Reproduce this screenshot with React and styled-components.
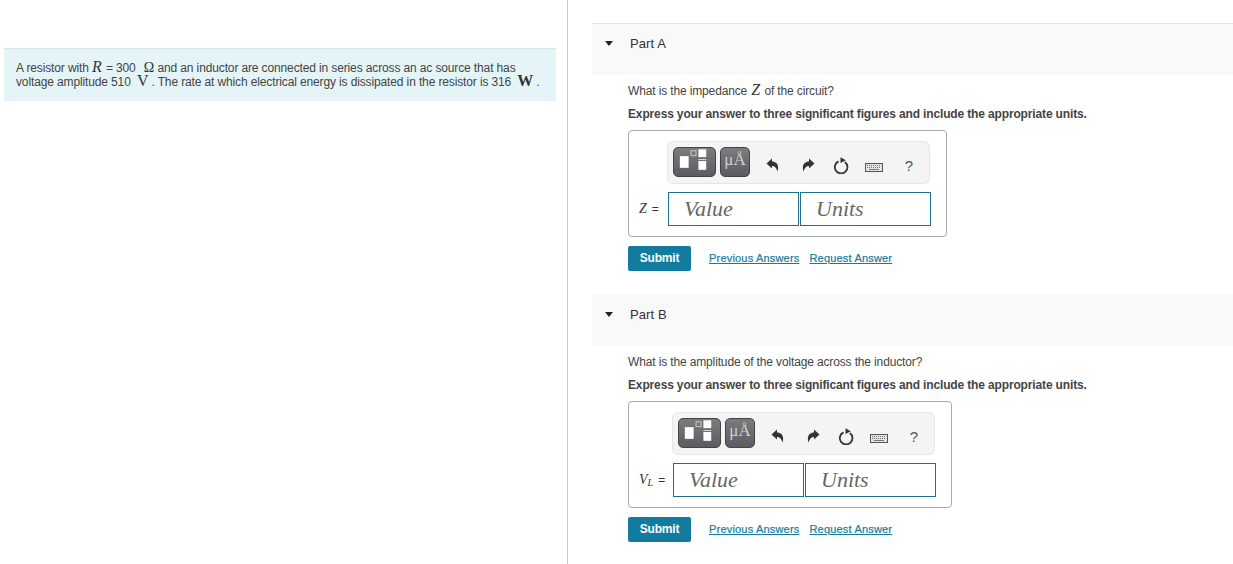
import React from "react";
import styled, { createGlobalStyle } from "styled-components";

const Global = createGlobalStyle`
  html, body { margin: 0; padding: 0; background: #fff; overflow: hidden; }
  body { font-family: "Liberation Sans", Arial, sans-serif; color: #333; }
`;
const Page = styled.div`display: flex; width: 1233px; height: 564px; overflow: hidden;`;
const LeftPane = styled.aside`
  flex: none; width: 568px; height: 564px; box-sizing: border-box; border-right: 1px solid #b9cfd6; padding-top: 48px;
`;
const Callout = styled.div`
  margin-left: 4px; width: 552px; height: 53px; box-sizing: border-box; background: #e5f5f7;
  border-top: 1px solid #d5e6e8; padding: 12px 0 0 12px; font-size: 12px; line-height: 14px; color: #444; letter-spacing: -0.13px;
`;
const MathVar = styled.span`
  font-family: "Liberation Serif", "DejaVu Serif", serif; font-size: ${p => p.$size || 16}px; line-height: 12px; letter-spacing: 0;
  font-style: ${p => (p.$upright ? "normal" : "italic")}; font-weight: ${p => (p.$bold ? 700 : 400)};
  color: #333; margin: 0 ${p => p.$right ?? p.$gap ?? 0}px 0 ${p => p.$gap || 0}px;
`;
const RightPane = styled.main`flex: 1; padding: 23px 0 0 24px; min-width: 0;`;
const Part = styled.section`height: 271px;`;
const Band = styled.header`
  height: 52px; box-sizing: border-box; background: #f9f9f9; border-top: 1px solid ${p => (p.$first ? "#e2e2e2" : "#fff")};
  display: flex; align-items: flex-start; padding: 12px 0 0 13px; font-size: 13px; line-height: 15px; color: #333; letter-spacing: 0.1px;
`;
const Caret = styled.span`
  width: 0; height: 0; border-left: 4.5px solid transparent; border-right: 4.5px solid transparent; border-top: 5px solid #222;
  margin: 5px 17px 0 0; flex: none;
`;
const Body = styled.div`padding: 9px 0 0 36px;`;
const Question = styled.p`margin: 0; font-size: 12px; line-height: 14px; color: #444; height: 23px; letter-spacing: -0.14px;`;
const Instruction = styled.p`margin: 0; font-size: 12px; line-height: 14px; font-weight: 700; color: #444; letter-spacing: -0.145px;`;
const Card = styled.div`
  margin-top: 9px; width: ${p => p.$w}px; height: 107px; box-sizing: border-box; border: 1px solid #aaa; border-radius: 4px;
  padding: 10px 0 0 ${p => p.$indent}px;
`;
const Toolbar = styled.div`
  width: 263px; height: 43px; box-sizing: border-box; background: #f4f4f4; border: 1px solid #e6e6e6; border-radius: 6px;
  display: flex; align-items: flex-start; padding: 5px 0 0 5px;
`;
const TemplateBtn = styled.button`
  width: ${p => p.$w}px; height: 30px; padding: 0; border: 1px solid #444; border-radius: 5px; margin-right: 4px; flex: none;
  background: linear-gradient(#7c7c80, #5c5c60); display: flex; align-items: center; justify-content: center;
  font-family: "Liberation Serif", serif; color: #cfcfcf; font-size: 17px; line-height: 1;
`;
const UnitGlyph = styled.span`margin-top: -6px;`;
const ToolIcon = styled.span`display: flex; width: ${p => p.$w}px; height: 30px; align-items: center; justify-content: center; flex: none; margin-top: ${p => p.$mt || 0}px;`;
const Help = styled.span`font-size: 15px; color: #555; line-height: 1;`;
const InputRow = styled.div`display: flex; align-items: center; margin-top: 8px; margin-left: ${p => p.$back}px;`;
const Label = styled.div`
  font-size: 12px; color: #333; width: ${p => p.$w}px; flex: none; box-sizing: border-box; padding-left: 10px; white-space: nowrap;
`;
const LabelVar = styled.span`font-family: "Liberation Serif", serif; font-style: italic; font-size: 14px; margin-right: 5px;`;
const Sub = styled.sub`font-size: 10px; line-height: 0; vertical-align: -2px;`;
const Field = styled.div`
  width: 131px; height: 34px; box-sizing: border-box; border: 1px solid #1d6f8a; margin-right: 1px; padding-left: 15px;
  font-family: "Liberation Serif", serif; font-style: italic; font-size: 22px; line-height: 31px; color: #666; background: #fff;
`;
const Actions = styled.div`display: flex; align-items: center; margin-top: 9px;`;
const Submit = styled.button`
  width: 63px; height: 25px; padding: 0 0 2px; border: 0; border-radius: 2px; background: #137c9e; color: #fff;
  font-family: "Liberation Sans", sans-serif; font-size: 12px; font-weight: 700; margin-right: 18px; letter-spacing: -0.2px;
`;
const Link = styled.a`
  font-size: 11px; color: #137c9e; text-decoration: underline; margin: 0 10px 2px 0; cursor: pointer; line-height: 14px;
  letter-spacing: 0.19px; -webkit-text-stroke: 0.2px #137c9e;
`;

const TemplateIcon = () => (
  <svg width="42" height="28" viewBox="0 0 42 28">
    <rect x="6" y="8" width="9" height="12" fill="#fff" />
    <rect x="17.5" y="2.5" width="5" height="5" fill="none" stroke="#ccc" strokeWidth="1" />
    <rect x="25" y="1" width="8" height="8" fill="#fff" />
    <rect x="25" y="11" width="8" height="1" fill="#ddd" />
    <rect x="25" y="13" width="8" height="9" fill="#fff" />
  </svg>
);
const Undo = ({ flip }) => (
  <svg width="13" height="14" viewBox="0 0 13 14" style={flip ? { transform: "scaleX(-1)" } : undefined}>
    <path d="M0.5 5.5 L6 0.5 V3.5 C10.5 3.5 13.5 7 11.5 13.5 C10.5 10 9 8 6 8 V10.5 Z" fill="#333" />
  </svg>
);
const Reset = () => (
  <svg width="16" height="17" viewBox="0 0 16 17">
    <path d="M5.5 4.4 A6.3 6.3 0 1 0 11.8 5" fill="none" stroke="#333" strokeWidth="1.8" />
    <path d="M7.5 0.3 L12.8 3.3 L7.5 6 Z" fill="#333" />
  </svg>
);
const Keyboard = () => (
  <svg width="18" height="9" viewBox="0 0 18 9">
    <rect x="0.5" y="0.5" width="17" height="8" fill="#e4e4e4" stroke="#555" />
    <path d="M2 2.5H16M2 4.5H16" stroke="#777" strokeWidth="1" strokeDasharray="1 1" />
    <path d="M4 6.5H14" stroke="#777" strokeWidth="1" />
  </svg>
);

const MathBar = () => (
  <Toolbar>
    <TemplateBtn $w={43}><TemplateIcon /></TemplateBtn>
    <TemplateBtn $w={30}><UnitGlyph>μÅ</UnitGlyph></TemplateBtn>
    <ToolIcon $w={36} $mt={3}><Undo /></ToolIcon>
    <ToolIcon $w={36} $mt={3}><Undo flip /></ToolIcon>
    <ToolIcon $w={30} $mt={3}><Reset /></ToolIcon>
    <ToolIcon $w={36} $mt={5}><Keyboard /></ToolIcon>
    <ToolIcon $w={34} $mt={3}><Help>?</Help></ToolIcon>
  </Toolbar>
);

const AnswerPart = ({ first, title, question, label, cardW, indent, back, labelW }) => (
  <Part>
    <Band $first={first}><Caret />{title}</Band>
    <Body>
      <Question>{question}</Question>
      <Instruction>Express your answer to three significant figures and include the appropriate units.</Instruction>
      <Card $w={cardW} $indent={indent}>
        <MathBar />
        <InputRow $back={back}>
          <Label $w={labelW}>{label}</Label>
          <Field>Value</Field>
          <Field>Units</Field>
        </InputRow>
      </Card>
      <Actions>
        <Submit>Submit</Submit>
        <Link>Previous Answers</Link>
        <Link>Request Answer</Link>
      </Actions>
    </Body>
  </Part>
);

export default function App() {
  return (
    <Page>
      <Global />
      <LeftPane>
        <Callout>
          A resistor with <MathVar $right={1}>R</MathVar> = 300 <MathVar $upright $size={14} $gap={5} $right={0}>Ω</MathVar> and an inductor are connected in series across an ac source that has<br />
          voltage amplitude 510 <MathVar $upright $gap={3}>V</MathVar>. The rate at which electrical energy is dissipated in the resistor is 316 <MathVar $upright $bold $gap={3}>W</MathVar>.
        </Callout>
      </LeftPane>
      <RightPane>
        <AnswerPart
          first
          title="Part A"
          question={<>What is the impedance <MathVar $gap={1}>Z</MathVar> of the circuit?</>}
          label={<><LabelVar>Z</LabelVar>=</>}
          cardW={319}
          indent={38}
          back={-38}
          labelW={39}
        />
        <AnswerPart
          title="Part B"
          question="What is the amplitude of the voltage across the inductor?"
          label={<><LabelVar>V<Sub>L</Sub></LabelVar>=</>}
          cardW={324}
          indent={43}
          back={-43}
          labelW={44}
        />
      </RightPane>
    </Page>
  );
}
